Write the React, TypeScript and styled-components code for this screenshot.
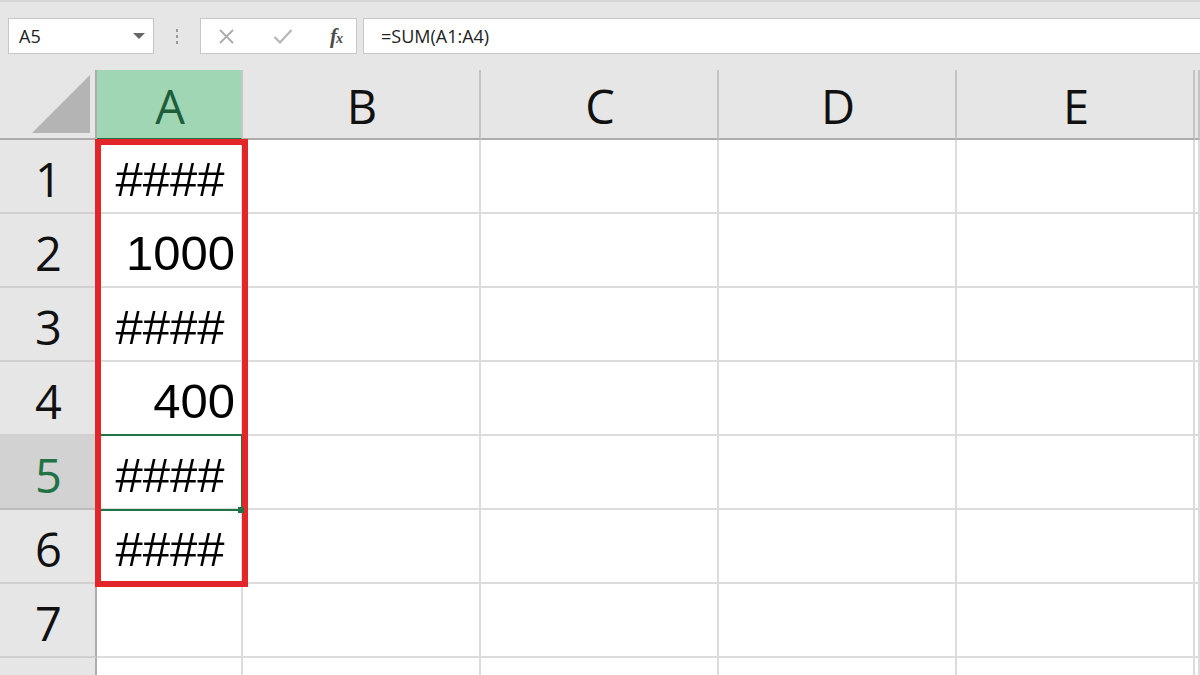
import React from 'react';
import styled, { createGlobalStyle } from 'styled-components';

const GlobalStyle = createGlobalStyle`
  html, body {
    margin: 0;
    padding: 0;
    background: #e6e6e6;
    overflow: hidden;
  }
  body {
    font-family: 'Open Sans', 'Noto Sans', sans-serif;
  }
`;

const Page = styled.div`
  width: 1200px;
  height: 675px;
  overflow: hidden;
  background: #e6e6e6;
`;

const Toolbar = styled.div`
  height: 70px;
  box-sizing: border-box;
  border-top: 2px solid #d6d6d6;
  padding: 16px 0 0 8px;
  display: flex;
  align-items: flex-start;
`;

const Box = styled.div`
  height: 36px;
  box-sizing: border-box;
  background: #fff;
  border: 1px solid #c6c6c6;
  display: flex;
  align-items: center;
`;

const NameBox = styled(Box)`
  width: 146px;
  padding: 0 8px 0 10px;
  justify-content: space-between;
  font-size: 18px;
  color: #222;
`;

const Caret = styled.span`
  width: 0;
  height: 0;
  border-left: 6px solid transparent;
  border-right: 6px solid transparent;
  border-top: 6px solid #666;
`;

const Dots = styled.div`
  width: 46px;
  height: 36px;
  display: flex;
  flex-direction: column;
  align-items: center;
  justify-content: center;
  gap: 3px;

  span {
    width: 2px;
    height: 3px;
    background: #9a9a9a;
  }
`;

const IconBox = styled(Box)`
  width: 157px;
  padding: 0 14px 0 17px;
  justify-content: space-between;
`;

const Fx = styled.span`
  font-family: 'Liberation Serif', serif;
  font-style: italic;
  font-weight: bold;
  font-size: 21px;
  color: #4a4a4a;
  letter-spacing: -1px;

  sub {
    font-size: 14px;
    vertical-align: 0;
  }
`;

const FormulaBox = styled(Box)`
  flex: 1;
  margin-left: 6px;
  border-right: none;
  padding-left: 17px;
  font-size: 18px;
  color: #222;
`;

const Sheet = styled.div`
  position: relative;
  display: grid;
  grid-template-columns: 97px 146px repeat(4, 238px) 1fr;
  grid-template-rows: 70px repeat(8, 74px);
`;

const Corner = styled.div`
  box-sizing: border-box;
  border-right: 2px solid #acacac;
  border-bottom: 2px solid #acacac;
  position: relative;

  &::after {
    content: '';
    position: absolute;
    right: 5px;
    bottom: 5px;
    width: 0;
    height: 0;
    border-left: 58px solid transparent;
    border-bottom: 58px solid #b4b4b4;
  }
`;

const ColHeader = styled.div<{ $active?: boolean }>`
  box-sizing: border-box;
  background: ${(p) => (p.$active ? '#a0d6b4' : '#e6e6e6')};
  border-right: 2px solid ${(p) => (p.$active ? '#c6c6c6' : '#c4c4c4')};
  border-bottom: 2px solid ${(p) => (p.$active ? '#217346' : '#acacac')};
  color: ${(p) => (p.$active ? '#1e5e3a' : '#111')};
  font-size: 47px;
  display: flex;
  align-items: center;
  justify-content: center;
  padding: 3px 0 0 2px;
`;

const RowHeader = styled.div<{ $active?: boolean }>`
  box-sizing: border-box;
  background: ${(p) => (p.$active ? '#d2d2d2' : '#e6e6e6')};
  border-right: 2px solid #acacac;
  border-bottom: 2px solid ${(p) => (p.$active ? '#bcbcbc' : '#d0d0d0')};
  color: ${(p) => (p.$active ? '#217346' : '#111')};
  font-size: 47px;
  display: flex;
  align-items: center;
  justify-content: center;
  padding: 6px 0 0 2px;
`;

const Cell = styled.div<{ $align?: 'center' | 'right' }>`
  box-sizing: border-box;
  background: #fff;
  border-right: 2px solid #dcdcdc;
  border-bottom: 2px solid #dcdcdc;
  font-family: 'Liberation Sans', Arial, sans-serif;
  font-size: 49px;
  color: #000;
  display: flex;
  align-items: center;
  justify-content: ${(p) => (p.$align === 'right' ? 'flex-end' : 'center')};
  padding: ${(p) => (p.$align === 'right' ? '6px 6px 0 0' : '6px 0 0 2px')};
  white-space: nowrap;
  overflow: hidden;
`;

const Selection = styled.div`
  position: absolute;
  left: 97px;
  top: 364px;
  width: 146px;
  height: 77px;
  box-sizing: border-box;
  border: 2px solid #217346;
  pointer-events: none;
`;

const FillHandle = styled.div`
  position: absolute;
  left: 238px;
  top: 437px;
  width: 6px;
  height: 6px;
  background: #217346;
  z-index: 2;
`;

const Highlight = styled.div`
  position: absolute;
  left: 95px;
  top: 69px;
  width: 153px;
  height: 448px;
  box-sizing: border-box;
  border: 6px solid #e3262a;
  pointer-events: none;
`;

const columns = ['A', 'B', 'C', 'D', 'E', ''];
const colA: { text: string; align: 'center' | 'right' }[] = [
  { text: '####', align: 'center' },
  { text: '1000', align: 'right' },
  { text: '####', align: 'center' },
  { text: '400', align: 'right' },
  { text: '####', align: 'center' },
  { text: '####', align: 'center' },
  { text: '', align: 'center' },
  { text: '', align: 'center' },
];

const App = () => (
  <Page>
    <GlobalStyle />
    <Toolbar>
      <NameBox>
        A5
        <Caret />
      </NameBox>
      <Dots>
        <span />
        <span />
        <span />
      </Dots>
      <IconBox>
        <svg width="17" height="17" viewBox="0 0 17 17">
          <path d="M2 2 L15 15 M15 2 L2 15" stroke="#ababab" strokeWidth="1.8" fill="none" />
        </svg>
        <svg width="20" height="17" viewBox="0 0 20 17">
          <path d="M1.5 9 L7 14.5 L18.5 2" stroke="#b5b5b5" strokeWidth="2.2" fill="none" />
        </svg>
        <Fx>
          f<sub>x</sub>
        </Fx>
      </IconBox>
      <FormulaBox>=SUM(A1:A4)</FormulaBox>
    </Toolbar>

    <Sheet>
      <Corner />
      {columns.map((c, i) => (
        <ColHeader key={i} $active={c === 'A'}>
          {c}
        </ColHeader>
      ))}
      {colA.map((cell, r) => (
        <React.Fragment key={r}>
          <RowHeader $active={r === 4}>{r < 7 ? r + 1 : ''}</RowHeader>
          <Cell $align={cell.align}>{cell.text}</Cell>
          {columns.slice(1).map((_, i) => (
            <Cell key={i} />
          ))}
        </React.Fragment>
      ))}
      <Selection />
      <Highlight />
      <FillHandle />
    </Sheet>
  </Page>
);

export default App;
